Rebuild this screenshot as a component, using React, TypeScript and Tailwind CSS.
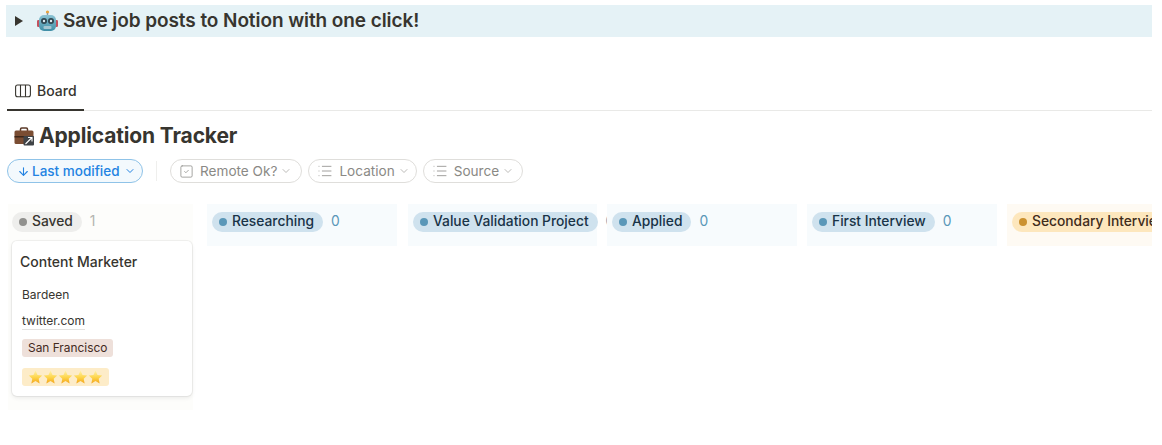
import { ChevronDown, ArrowDown, SquareCheck, List } from "lucide-react";

const columns = [
  { name: "Researching", count: 0, width: "w-[190px]", mr: "mr-[11px]", tone: "blue" },
  { name: "Value Validation Project", count: 0, width: "w-[189px]", mr: "mr-[10px]", tone: "blue" },
  { name: "Applied", count: 0, width: "w-[190px]", mr: "mr-[10px]", tone: "blue" },
  { name: "First Interview", count: 0, width: "w-[190px]", mr: "mr-[10px]", tone: "blue" },
  { name: "Secondary Interview", count: 0, width: "w-[190px]", mr: "mr-0", tone: "orange" },
];

function RobotIcon() {
  return (
    <svg width="21" height="22" viewBox="0 0 21 22" className="shrink-0">
      <defs>
        <linearGradient id="robotBody" x1="0" y1="0" x2="0" y2="1">
          <stop offset="0" stopColor="#8cc4d4" />
          <stop offset="1" stopColor="#3f8ea6" />
        </linearGradient>
      </defs>
      <circle cx="10.5" cy="2" r="1.6" fill="#e8a33d" />
      <rect x="9.8" y="3" width="1.4" height="3" fill="#8b98a3" />
      <rect x="0" y="10" width="3" height="7" rx="1.2" fill="#c2525f" />
      <rect x="18" y="10" width="3" height="7" rx="1.2" fill="#c2525f" />
      <rect x="2" y="5" width="17" height="16" rx="5" fill="url(#robotBody)" />
      <circle cx="7" cy="11" r="3" fill="#2f4650" />
      <circle cx="14" cy="11" r="3" fill="#2f4650" />
      <circle cx="7" cy="11" r="1.2" fill="#dfeef3" />
      <circle cx="14" cy="11" r="1.2" fill="#dfeef3" />
      <rect x="6.5" y="16" width="8" height="3" rx="1" fill="#a4c6d1" />
    </svg>
  );
}

function BriefcaseIcon() {
  return (
    <svg width="20" height="20" viewBox="0 0 20 20" className="shrink-0">
      <path d="M6.5 5V3.2C6.5 2.5 7 2 7.7 2h4.6c.7 0 1.2.5 1.2 1.2V5" fill="none" stroke="#5b3a29" strokeWidth="1.5" />
      <rect x="0.5" y="4.5" width="19" height="13.5" rx="1.5" fill="#7a4d33" />
      <rect x="0.5" y="10" width="19" height="1.5" fill="#3c2619" />
      <rect x="9.5" y="10" width="10.5" height="9.5" rx="1" fill="#3f4347" />
      <path d="M11.5 18l6.5-6.5M14 11.5h4v4" stroke="#fff" strokeWidth="1.1" fill="none" />
    </svg>
  );
}

function Star() {
  return (
    <svg width="15" height="14" viewBox="0 0 24 23" className="shrink-0">
      <defs>
        <linearGradient id="starFill" x1="0" y1="0" x2="0" y2="1">
          <stop offset="0" stopColor="#fff2a8" />
          <stop offset="0.55" stopColor="#fdd348" />
          <stop offset="1" stopColor="#f3a51c" />
        </linearGradient>
      </defs>
      <path
        d="M12 1l3.3 7.2 7.7.9-5.7 5.3 1.5 7.7L12 18.2l-6.8 3.9 1.5-7.7L1 9.1l7.7-.9z"
        fill="url(#starFill)"
      />
    </svg>
  );
}

function BoardIcon() {
  return (
    <svg width="16" height="14" viewBox="0 0 16 14" fill="none" stroke="#37352f" strokeWidth="1.1">
      <rect x="0.6" y="1" width="14.8" height="11.8" rx="2" />
      <path d="M5.5 1v11.8M10.5 1v11.8" />
    </svg>
  );
}

function FilterPill({ label, icon, pr }: { label: string; icon: React.ReactNode; pr: string }) {
  return (
    <div className={`flex h-6 items-center rounded-full border border-[#dfdedb] pl-[8px] text-[13.6px] text-[#8a8985] ${pr}`}>
      {icon}
      <span className="ml-[6px]">{label}</span>
      <ChevronDown size={12} strokeWidth={1.5} className="ml-[3px] text-[#a5a4a0]" />
    </div>
  );
}

function ColumnHead({ name, count, width, mr, tone }: (typeof columns)[number]) {
  const orange = tone === "orange";
  return (
    <div
      className={`flex h-[42px] shrink-0 items-start px-[5px] pt-[8px] ${width} ${mr} ${
        orange ? "bg-[#fefaf3]" : "bg-[#f7fbfd]"
      }`}
    >
      <div
        className={`flex h-5 shrink-0 items-center gap-[5px] whitespace-nowrap rounded-full pl-[7px] pr-[9px] text-[13.8px] font-medium leading-[18px] ${
          orange ? "bg-[#fde7bd] text-[#402c1b]" : "bg-[#cfe2ee] text-[#183347]"
        }`}
      >
        <span className={`h-2 w-2 rounded-full ${orange ? "bg-[#cb912f]" : "bg-[#5a97b8]"}`} />
        <span className="-mt-[2px]">{name}</span>
      </div>
      <span className="ml-[8px] -mt-px text-[13.8px] leading-5 text-[#5a97b8]">{count}</span>
    </div>
  );
}

export default function App() {
  return (
    <div className="h-[445px] w-[1162px] overflow-hidden bg-white pr-[10px] font-['Inter',sans-serif] text-[#37352f]">
      {/* Toggle banner */}
      <div className="pl-[6px] pt-[5px]">
        <div className="flex h-8 items-center bg-[#e5f2f6] pl-[9px]">
          <svg width="8" height="10" viewBox="0 0 8 10" className="mr-[14px]">
            <path d="M0 0l8 5-8 5z" fill="#37352f" />
          </svg>
          <RobotIcon />
          <span className="ml-[5px] text-[19px] font-semibold tracking-[-0.08px]">
            Save job posts to Notion with one click!
          </span>
        </div>
      </div>

      {/* Tabs */}
      <div className="mt-[38px] ml-[7px] flex h-9 border-b border-[#e9e9e7]">
        <div className="-mb-px flex w-[77px] items-center gap-[6px] border-b-2 border-[#37352f] pl-2 pb-[3px] text-[14px] font-medium">
          <BoardIcon />
          Board
        </div>
      </div>

      {/* Title */}
      <div className="ml-[14px] mt-[11px] flex h-7 items-center gap-[5px]">
        <BriefcaseIcon />
        <h1 className="text-[21px] font-bold tracking-[-0.15px]">Application Tracker</h1>
      </div>

      {/* Filters */}
      <div className="ml-[7px] mt-[9px] flex h-6 items-center">
        <div className="flex h-6 w-[136px] items-center rounded-full border border-[#8fc3e8] bg-[#f3f9fd] pl-[9px] text-[13.5px] font-medium text-[#2383e2]">
          <ArrowDown size={13} strokeWidth={2} />
          <span className="ml-[2px]">Last modified</span>
          <ChevronDown size={12} strokeWidth={2} className="ml-[4px]" />
        </div>
        <div className="mx-[13px] h-5 w-px bg-[#efefed]" />
        <div className="flex gap-[6px]">
          <FilterPill label="Remote Ok?" pr="pr-[9px]" icon={<SquareCheck size={15} strokeWidth={1.2} />} />
          <FilterPill label="Location" pr="pr-[6px]" icon={<List size={16} strokeWidth={1.2} />} />
          <FilterPill label="Source" pr="pr-[8px]" icon={<List size={16} strokeWidth={1.2} />} />
        </div>
      </div>

      {/* Board */}
      <div className="ml-[8px] mt-[21px] flex items-start overflow-hidden">
        <div className="mr-[14px] h-[206px] w-[185px] shrink-0 bg-[#fdfdfb] pt-[8px]">
          <div className="flex h-5 items-start pl-[4px]">
            <div className="flex h-5 items-center gap-[5px] rounded-full bg-[#eeeeec] pl-[7px] pr-[9px] text-[13.8px] font-medium leading-[18px]">
              <span className="h-2 w-2 rounded-full bg-[#91918e]" />
              <span className="-mt-[2px]">Saved</span>
            </div>
            <span className="ml-[8px] -mt-px text-[13.8px] leading-5 text-[#b4b4b0]">1</span>
          </div>

          {/* Card */}
          <div className="ml-[4px] mt-[9px] h-[155px] w-[180px] rounded-[5px] bg-white pl-[8px] pt-[11px] shadow-[0_0_0_1px_rgba(15,15,15,0.05),0_2px_4px_rgba(15,15,15,0.08)]">
            <div className="text-[14px] font-medium leading-5">Content Marketer</div>
            <div className="ml-[2px] mt-[15px] text-[12px] leading-[16px]">Bardeen</div>
            <div className="ml-[2px] mt-[10px] w-fit border-b border-[#e3e2e0] text-[12px] leading-[16px]">twitter.com</div>
            <div className="ml-[2px] mt-[9px] w-fit rounded-[3px] bg-[#eee0da] px-[6px] text-[11.9px] leading-[18px] text-[#442a1e]">
              San Francisco
            </div>
            <div className="ml-[2px] mt-[11px] flex h-[18px] w-fit items-center rounded-[3px] bg-[#fdecc8] px-[6px]">
              {[0, 1, 2, 3, 4].map((i) => (
                <Star key={i} />
              ))}
            </div>
          </div>
        </div>

        {columns.map((c) => (
          <ColumnHead key={c.name} {...c} />
        ))}
      </div>
    </div>
  );
}
